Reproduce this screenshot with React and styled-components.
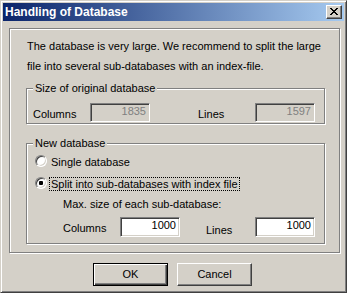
import React from "react";
import styled, { createGlobalStyle } from "styled-components";

const GlobalStyle = createGlobalStyle`
  html, body { margin: 0; padding: 0; background: #d4d0c8; }
  body { font-family: "Liberation Sans", Arial, sans-serif; font-size: 11px; color: #000; }
  * { box-sizing: border-box; }
`;

const Window = styled.div`
  width: 347px;
  height: 293px;
  background: #d4d0c8;
  border: 1px solid;
  border-color: #d4d0c8 #404040 #404040 #d4d0c8;
  box-shadow: inset 1px 1px 0 #fff, inset -1px -1px 0 #808080;
  padding: 2px;
  display: flex;
  flex-direction: column;
`;

const TitleBar = styled.div`
  height: 18px;
  flex: none;
  display: flex;
  align-items: center;
  padding: 0 2px;
  background: linear-gradient(to right, #0a246a, #a6caf0);
`;

const Title = styled.span`
  font-weight: bold;
  font-size: 12px;
  line-height: 14px;
  color: #fff;
  white-space: nowrap;
`;

const CloseButton = styled.div`
  margin-left: auto;
  width: 16px;
  height: 14px;
  background: #d4d0c8;
  border: 1px solid;
  border-color: #fff #404040 #404040 #fff;
  box-shadow: inset -1px -1px 0 #808080;
  display: flex;
  align-items: flex-start;
  padding: 2px 0 0 3px;
`;

const Etched = styled.div`
  border: 1px solid #808080;
  box-shadow: inset 1px 1px 0 #fff, 1px 1px 0 #fff;
`;

const OuterBox = styled(Etched)`
  margin: 7px 4px 0 6px;
  height: 225px;
  flex: none;
  display: flex;
  flex-direction: column;
  align-items: flex-start;
  padding: 7px 0 0 16px;
`;

const Intro = styled.p`
  margin: 0 0 0 1px;
  line-height: 20px;
  white-space: nowrap;
`;

const Group = styled(Etched)`
  position: relative;
  width: 299px;
  height: ${(p) => p.$h}px;
  margin-top: ${(p) => p.$mt}px;
  padding: ${(p) => p.$pad};
  display: flex;
  flex-direction: column;
  align-items: flex-start;
`;

const GroupLabel = styled.span`
  position: absolute;
  top: -7px;
  left: 6px;
  padding: 0 2px;
  line-height: 13px;
  background: #d4d0c8;
  white-space: nowrap;
`;

const Row = styled.div`
  display: flex;
  align-items: flex-start;
  margin-top: ${(p) => p.$mt || 0}px;
  margin-left: ${(p) => p.$ml || 0}px;
`;

const FieldLabel = styled.span`
  width: ${(p) => p.$w}px;
  margin-top: ${(p) => p.$mt}px;
  margin-left: ${(p) => p.$ml || 0}px;
  line-height: 13px;
  white-space: nowrap;
`;

const TextBox = styled.div`
  width: 60px;
  height: ${(p) => p.$h}px;
  display: flex;
  justify-content: flex-end;
  align-items: flex-start;
  padding: 0 3px 0 0;
  line-height: 14px;
  background: ${(p) => (p.$disabled ? "#d4d0c8" : "#fff")};
  color: ${(p) => (p.$disabled ? "#808080" : "#000")};
  border: 1px solid;
  border-color: #808080 #fff #fff #808080;
  box-shadow: inset 1px 1px 0 #404040, inset -1px -1px 0 #d4d0c8;
`;

const RadioCircle = styled.span`
  width: 12px;
  height: 12px;
  flex: none;
  border-radius: 50%;
  background: #fff;
  border: 1px solid;
  border-color: #808080 #fff #fff #808080;
  box-shadow: inset 1px 1px 0 #404040, inset -1px -1px 0 #d4d0c8;
  display: flex;
  align-items: center;
  justify-content: center;
  &::after {
    content: "";
    width: 4px;
    height: 4px;
    border-radius: 1px;
    background: ${(p) => (p.$checked ? "#000" : "transparent")};
  }
`;

const RadioText = styled.span`
  margin-left: 2px;
  padding: 0 1px;
  line-height: 12px;
  border: 1px dotted ${(p) => (p.$focus ? "#000" : "transparent")};
  white-space: nowrap;
`;

const PlainLabel = styled.span`
  margin-top: ${(p) => p.$mt}px;
  margin-left: ${(p) => p.$ml}px;
  line-height: 13px;
  white-space: nowrap;
`;

const ButtonRow = styled.div`
  display: flex;
  gap: 9px;
  margin-top: 10px;
  padding-left: 90px;
`;

const Button = styled.div`
  width: 75px;
  height: 23px;
  display: flex;
  align-items: center;
  justify-content: center;
  background: #d4d0c8;
  border: 1px solid;
  border-color: ${(p) => (p.$default ? "#000" : "#fff #404040 #404040 #fff")};
  box-shadow: ${(p) =>
    p.$default
      ? "inset 1px 1px 0 #fff, inset -1px -1px 0 #404040, inset -2px -2px 0 #808080"
      : "inset -1px -1px 0 #808080"};
  line-height: 13px;
`;

const CloseGlyph = () => (
  <svg width="8" height="7" viewBox="0 0 8 7" shapeRendering="crispEdges">
    <path
      fill="#000"
      d="M0 0h2v1H0zM6 0h2v1H6zM1 1h2v1H1zM5 1h2v1H5zM2 2h4v1H2zM3 3h2v1H3zM2 4h4v1H2zM1 5h2v1H1zM5 5h2v1H5zM0 6h2v1H0zM6 6h2v1H6z"
    />
  </svg>
);

export default function App() {
  return (
    <>
      <GlobalStyle />
      <Window>
        <TitleBar>
          <Title>Handling of Database</Title>
          <CloseButton>
            <CloseGlyph />
          </CloseButton>
        </TitleBar>
        <OuterBox>
          <Intro>
            The database is very large. We recommend to split the large
            <br />
            file into several sub-databases with an index-file.
          </Intro>
          <Group $h={36} $mt={12} $pad="14px 0 0 6px">
            <GroupLabel>Size of original database</GroupLabel>
            <Row>
              <FieldLabel $w={57} $mt={5}>Columns</FieldLabel>
              <TextBox $h={19} $disabled>1835</TextBox>
              <FieldLabel $w={57} $mt={5} $ml={48}>Lines</FieldLabel>
              <TextBox $h={19} $disabled>1597</TextBox>
            </Row>
          </Group>
          <Group $h={101} $mt={19} $pad="11px 0 0 8px">
            <GroupLabel>New database</GroupLabel>
            <Row>
              <RadioCircle />
              <RadioText>Single database</RadioText>
            </Row>
            <Row $mt={8}>
              <RadioCircle $checked />
              <RadioText $focus>Split into sub-databases with index file</RadioText>
            </Row>
            <PlainLabel $mt={7} $ml={28}>Max. size of each sub-database:</PlainLabel>
            <Row $mt={6} $ml={28}>
              <FieldLabel $w={57} $mt={5}>Columns</FieldLabel>
              <TextBox $h={20}>1000</TextBox>
              <FieldLabel $w={49} $mt={7} $ml={26}>Lines</FieldLabel>
              <TextBox $h={20}>1000</TextBox>
            </Row>
          </Group>
        </OuterBox>
        <ButtonRow>
          <Button $default>OK</Button>
          <Button>Cancel</Button>
        </ButtonRow>
      </Window>
    </>
  );
}
